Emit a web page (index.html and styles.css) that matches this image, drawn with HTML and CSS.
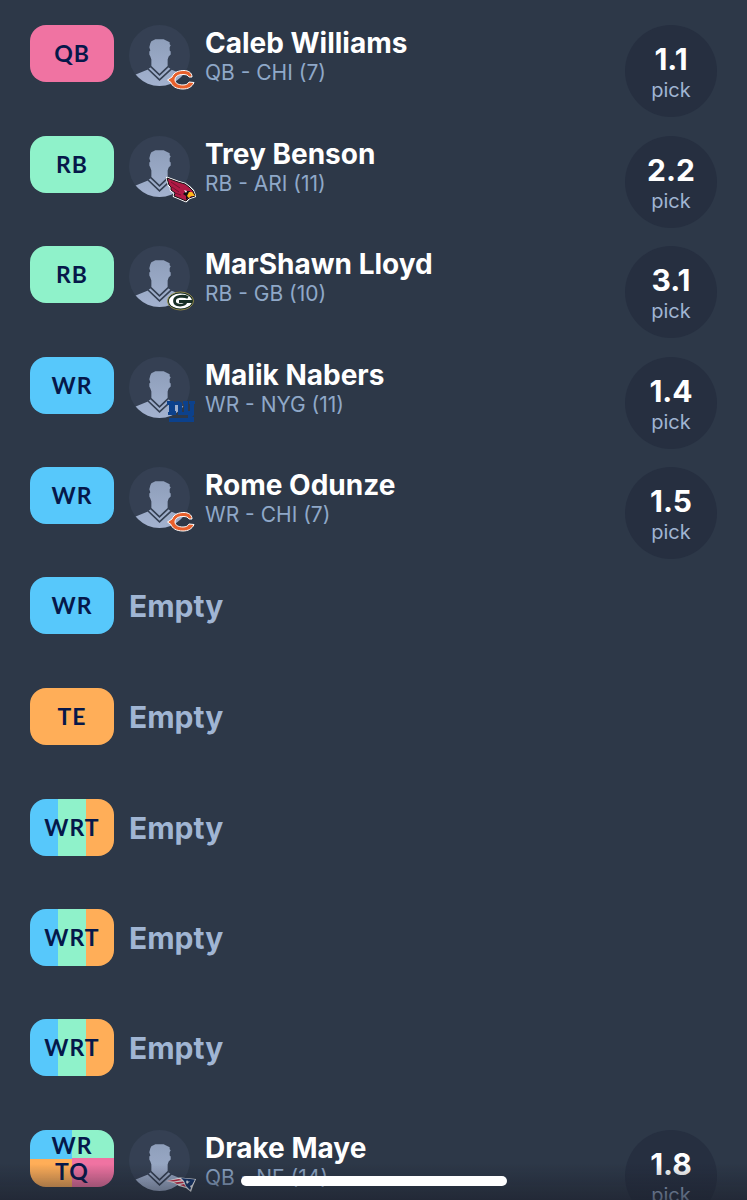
FILE: index.html
```
<!DOCTYPE html>
<html lang="en">
<head>
    <meta charset="UTF-8">
    <meta name="viewport" content="width=device-width, initial-scale=1.0">
    <title>Roster</title>
    <link rel="stylesheet" href="styles.css">
</head>
<body>

    <!-- shared shapes -->
    <svg class="defs" aria-hidden="true">
        <defs>
            <linearGradient id="skin" x1="0" y1="0" x2="0" y2="1">
                <stop offset="0" stop-color="#8f9fbb"/>
                <stop offset="1" stop-color="#a3b2cf"/>
            </linearGradient>
            <clipPath id="round"><circle cx="30" cy="30" r="30"/></clipPath>
        </defs>

        <symbol id="player" viewBox="0 0 60 60">
            <circle cx="30" cy="30" r="30" fill="#354053"/>
            <g clip-path="url(#round)">
                <path fill="url(#skin)" d="M21 18 L22 16 L24 15 L26 14 L28 14 L30 14 L32 14 L34 14 L36 15 L38 16 L40 17 L40 19 L41 20 L40 22 L40 25 L41 26 L41 29 L39 31 L38 34 L38 41 L42 44 L54 49 L50 60 L10 60 L6 49 L18 44 L22 41 L22 34 L21 31 L20 29 L20 26 L21 25 L20 22 Z"/>
                <path fill="none" stroke="#354053" stroke-width="1.6" d="M21.500 41 L30 49 L38.500 41 M18.500 43 L30 54 L42 43"/>
            </g>
        </symbol>

        <symbol id="chi" viewBox="0 0 30 30">
            <path fill="#e8602c" stroke="#fff" stroke-width="1" stroke-linejoin="round" d="M1.500 15 L6 12 C8 7 13 5.500 18 5.500 C22 5.500 26 7.500 26 12 L23 12 C22 10 20 9.500 17 9.500 C12 9.500 9 11.500 9 15 C9 18 12 20 17 20 C20 20 22 19 23 17 L28 17.500 C26 22 22 24 17 24 C10 24 6 21 5 17.500 Z"/>
        </symbol>

        <symbol id="ari" viewBox="0 0 30 30">
            <path fill="#a5173f" stroke="#fff" stroke-width="2.500" stroke-linejoin="round" d="M1 2 L12 6 L19 8 L23 11 L27 15 L29 20 L23 22 L20 25 L13 22 L8 20 L9 17 L5 14 L5 11 L3 9 Z"/>
            <path fill="#b01a45" stroke="#111" stroke-width="1" stroke-linejoin="round" d="M1 2 L12 6 L19 8 L23 11 L27 15 L29 20 L23 22 L20 25 L13 22 L8 20 L9 17 L5 14 L5 11 L3 9 Z"/>
            <path fill="none" stroke="#5b0d26" stroke-width=".7" d="M5 6 L14 12 M6 11 L13 16 M9 17 L15 19"/>
            <path fill="#111" d="M20 15 L24 15 L23 21 L20 24 L20 20 L17 18 Z"/>
            <path fill="#ffb81c" d="M23 16 L26 16 L29 20 L25 20 L23 22 L21 20 Z"/>
            <path fill="#fff" d="M18 14 L21 15 L20 17 Z"/>
        </symbol>

        <symbol id="gb" viewBox="0 0 30 30">
            <ellipse cx="14.500" cy="15" rx="13" ry="9" fill="#182f26" stroke="#a8984a" stroke-width=".8"/>
            <ellipse cx="14.500" cy="15" rx="11.500" ry="7.500" fill="#fff"/>
            <path fill="none" stroke="#182f26" stroke-width="2.800" d="M22 11.500 C18 9.500 8.500 9.500 8.500 15 C8.500 20.500 19 20 20 16 M13 15.500 H26"/>
        </symbol>

        <symbol id="nyg" viewBox="0 0 30 30">
            <path fill="#0c418c" d="M1 4 H8 V5 L13 4 L16 6 V15 H18 V7 H17 V4 H22 V14 H24 V7 H23 V4 H29 V7 H28 V18 L26 20 H28 V25 H3 V21 H22 V18 H12 V8 H9 V14 H10 V18 H2 V15 H3 V8 H1 Z"/>
        </symbol>

        <symbol id="ne" viewBox="0 0 30 30">
            <path fill="#fff" d="M0 11 L14 7.500 L30 9 L27 16 L26 19 L25 22 L20 18 L13 16 L8 13 Z"/>
            <path fill="#d02a45" d="M1 11 L13 9 L16 10 L8 11.500 Z M8 12.500 L17 11.500 L18 13 L11 14 Z M14 15 L18 14 L20 17 Z"/>
            <path fill="#12336b" d="M15 8 L29 9.500 L26 15 L24 16 L25 18 L24 20 L20 16 L18 11 Z"/>
            <path fill="#fff" d="M21 10 L22 11.500 L24 11.500 L22.500 12.500 L21 14 L20 12 Z"/>
        </symbol>
    </svg>

    <main class="roster">

        <ul class="group">
            <li class="slot">
                <button type="button" class="pos qb">QB</button>
                <div class="avatar">
                    <svg class="face"><use href="#player"/></svg>
                    <svg class="team"><use href="#chi"/></svg>
                </div>
                <div class="info">
                    <h2 class="name">Caleb Williams</h2>
                    <p class="meta">QB - CHI (7)</p>
                </div>
                <div class="pick"><strong>1.1</strong><span>pick</span></div>
            </li>
        </ul>

        <ul class="group">
            <li class="slot">
                <button type="button" class="pos rb">RB</button>
                <div class="avatar">
                    <svg class="face"><use href="#player"/></svg>
                    <svg class="team"><use href="#ari"/></svg>
                </div>
                <div class="info">
                    <h2 class="name">Trey Benson</h2>
                    <p class="meta">RB - ARI (11)</p>
                </div>
                <div class="pick"><strong>2.2</strong><span>pick</span></div>
            </li>
            <li class="slot">
                <button type="button" class="pos rb">RB</button>
                <div class="avatar">
                    <svg class="face"><use href="#player"/></svg>
                    <svg class="team"><use href="#gb"/></svg>
                </div>
                <div class="info">
                    <h2 class="name">MarShawn Lloyd</h2>
                    <p class="meta">RB - GB (10)</p>
                </div>
                <div class="pick"><strong>3.1</strong><span>pick</span></div>
            </li>
        </ul>

        <ul class="group">
            <li class="slot">
                <button type="button" class="pos wr">WR</button>
                <div class="avatar">
                    <svg class="face"><use href="#player"/></svg>
                    <svg class="team"><use href="#nyg"/></svg>
                </div>
                <div class="info">
                    <h2 class="name">Malik Nabers</h2>
                    <p class="meta">WR - NYG (11)</p>
                </div>
                <div class="pick"><strong>1.4</strong><span>pick</span></div>
            </li>
            <li class="slot">
                <button type="button" class="pos wr">WR</button>
                <div class="avatar">
                    <svg class="face"><use href="#player"/></svg>
                    <svg class="team"><use href="#chi"/></svg>
                </div>
                <div class="info">
                    <h2 class="name">Rome Odunze</h2>
                    <p class="meta">WR - CHI (7)</p>
                </div>
                <div class="pick"><strong>1.5</strong><span>pick</span></div>
            </li>
            <li class="slot">
                <button type="button" class="pos wr">WR</button>
                <p class="empty">Empty</p>
            </li>
        </ul>

        <ul class="group">
            <li class="slot">
                <button type="button" class="pos te">TE</button>
                <p class="empty">Empty</p>
            </li>
        </ul>

        <ul class="group">
            <li class="slot">
                <button type="button" class="pos flex">WRT</button>
                <p class="empty">Empty</p>
            </li>
            <li class="slot">
                <button type="button" class="pos flex">WRT</button>
                <p class="empty">Empty</p>
            </li>
            <li class="slot">
                <button type="button" class="pos flex">WRT</button>
                <p class="empty">Empty</p>
            </li>
        </ul>

        <ul class="group">
            <li class="slot">
                <button type="button" class="pos super">WR<br>TQ</button>
                <div class="avatar">
                    <svg class="face"><use href="#player"/></svg>
                    <svg class="team"><use href="#ne"/></svg>
                </div>
                <div class="info">
                    <h2 class="name">Drake Maye</h2>
                    <p class="meta">QB - NE (14)</p>
                </div>
                <div class="pick"><strong>1.8</strong><span>pick</span></div>
            </li>
        </ul>

    </main>

    <div class="fade"></div>
    <div class="home-bar"></div>

</body>
</html>
```
FILE: styles.css
```
*{
    margin: 0;
    padding: 0;
    box-sizing: border-box;
}

:root{
    --pink: #f073a2;
    --green: #8ff2ca;
    --blue: #57c8fb;
    --orange: #ffae58;
}

body{
    background-color: #2d3848;
    font-family: Inter, "Liberation Sans", sans-serif;
}

.defs{
    position: absolute;
    width: 0;
    height: 0;
}

.roster{
    display: flex;
    flex-direction: column;
    gap: 1px;
    height: 100vh;
    padding: 25px 30px 0;
    overflow-y: auto;
    scrollbar-width: none;
}

.group{
    list-style: none;
}

.slot{
    display: flex;
    align-items: flex-start;
    gap: 15px;
    height: 110px;
}

/* position badge */

.pos{
    flex: none;
    width: 84px;
    height: 57px;
    padding-bottom: 2px;
    border: none;
    border-radius: 16px;
    color: #06184a;
    font-family: Lato, "Liberation Sans", sans-serif;
    font-size: 23px;
    font-weight: 700;
    line-height: 26px;
    letter-spacing: 1px;
    cursor: pointer;
}

.qb{
    background-color: var(--pink);
}

.rb{
    background-color: var(--green);
}

.wr{
    background-color: var(--blue);
}

.te{
    background-color: var(--orange);
}

.flex{
    background: linear-gradient(90deg, var(--blue) 0 33.3%, var(--green) 33.3% 66.6%, var(--orange) 66.6%);
}

.super{
    background: conic-gradient(var(--green) 0 25%, var(--pink) 25% 50%, var(--orange) 50% 75%, var(--blue) 75%);
}

/* player */

.avatar{
    position: relative;
    flex: none;
    width: 61px;
    height: 61px;
}

.face{
    display: block;
    width: 100%;
    height: 100%;
}

.team{
    position: absolute;
    right: -6px;
    bottom: -9px;
    width: 30px;
    height: 30px;
}

.info{
    flex: 1;
    padding-top: 1px;
}

.name{
    color: #fff;
    font-size: 28px;
    font-weight: 700;
    line-height: 34px;
}

.meta{
    color: #8fa8c8;
    font-size: 21px;
    font-weight: 400;
    line-height: 26px;
}

.empty{
    color: #a0b5d3;
    font-size: 30px;
    font-weight: 700;
    line-height: 58px;
}

.pick{
    display: flex;
    flex-direction: column;
    align-items: center;
    flex: none;
    width: 92px;
    height: 92px;
    padding-top: 16px;
    border-radius: 50%;
    background-color: #262f40;
}

.pick strong{
    color: #fff;
    font-size: 30px;
    font-weight: 700;
    line-height: 36px;
}

.pick span{
    color: #a0b5d3;
    font-size: 20px;
    line-height: 26px;
}

/* bottom of the screen */

.fade{
    position: fixed;
    left: 0;
    right: 0;
    bottom: 0;
    height: 36px;
    background: linear-gradient(rgba(28, 32, 44, 0), rgba(28, 32, 44, 0.6));
    pointer-events: none;
}

.home-bar{
    position: fixed;
    left: 50%;
    bottom: 14px;
    width: 266px;
    height: 10px;
    border-radius: 5px;
    background-color: #fff;
    transform: translateX(-50%);
}
```
